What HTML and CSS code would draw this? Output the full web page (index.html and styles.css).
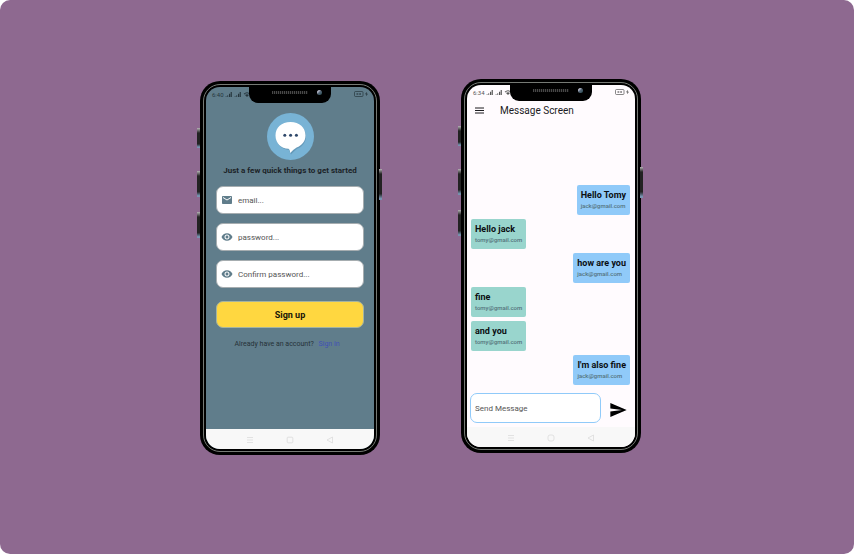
FILE: index.html
```html
<!DOCTYPE html>
<html lang="en">
<head>
<meta charset="utf-8">
<meta name="viewport" content="width=device-width, initial-scale=1">
<title>Chat app</title>
<link rel="stylesheet" href="styles.css">
</head>
<body>
<svg class="defs" aria-hidden="true">
  <symbol id="signal" viewBox="0 0 8 6"><path d="M0 6V5h1v1zM2 6V4h1v2zM4 6V2h1.400v4zM6 6V0h1.400v6z"/></symbol>
  <symbol id="wifi" viewBox="0 0 8 6"><path d="M0 2Q4-1.600 8 2L7.200 3Q4 .2.800 3zM1.600 3.700Q4 1.700 6.400 3.700L4 6z"/></symbol>
  <symbol id="battery" viewBox="0 0 14 6"><path d="M1.500.5h6.500q1 0 1 1v3q0 1-1 1h-6.500q-1 0-1-1v-3q0-1 1-1z" fill="none" stroke="currentColor" stroke-width=".7"/><path d="M2.500 2h1.800v2H2.500zM5.200 2H7v2H5.200z" opacity=".6"/><path d="M12.700.8l-1.600 2.500h1.200v2l1.600-2.600h-1.200z"/></symbol>
  <symbol id="eye" viewBox="0 0 24 24"><path d="M12 4.500C7 4.500 2.730 7.610 1 12c1.730 4.390 6 7.500 11 7.500s9.270-3.110 11-7.500c-1.730-4.390-6-7.500-11-7.500zM12 17c-2.760 0-5-2.240-5-5s2.240-5 5-5 5 2.240 5 5-2.240 5-5 5zm0-8c-1.660 0-3 1.340-3 3s1.340 3 3 3 3-1.340 3-3-1.340-3-3-3z"/></symbol>
  <symbol id="mail" viewBox="0 0 24 24"><path d="M20 4H4c-1.100 0-1.990.9-1.990 2L2 18c0 1.100.9 2 2 2h16c1.100 0 2-.9 2-2V6c0-1.100-.9-2-2-2zm0 4l-8 5-8-5V6l8 5 8-5v2z"/></symbol>
  <symbol id="recent" viewBox="0 0 8 8"><path d="M1 1.500h6M1 4h6M1 6.500h6" fill="none" stroke="currentColor" stroke-width=".8"/></symbol>
  <symbol id="back" viewBox="0 0 8 8"><path d="M6.500 1v6L1 4z" fill="none" stroke="currentColor" stroke-width=".8"/></symbol>
</svg>
<main class="stage">
  <section class="phone" aria-label="Sign up screen">
    <span class="key key-mute"></span><span class="key key-up"></span><span class="key key-down"></span><span class="key key-power"></span>
    <div class="notch"><span class="speaker"></span><span class="camera"></span></div>
    <div class="screen signup">
      <div class="status">
        <span>6:40</span>
        <svg class="signal"><use href="#signal"/></svg><svg class="signal"><use href="#signal"/></svg><svg class="signal"><use href="#wifi"/></svg>
        <svg class="battery"><use href="#battery"/></svg>
      </div>
      <form class="signup-form">
        <svg class="logo" viewBox="0 0 47 47" aria-hidden="true">
          <circle cx="23.500" cy="23.500" r="23.500" fill="#78b3d5"/>
          <path d="M24 10C15 10 9 15.500 9 23.500S15 36.500 22 37L24 41.500Q27 38.500 30 35.800C35.500 34 39 29 39 23.500 39 15.500 33 10 24 10z" fill="#507c98" opacity=".45"/>
          <path d="M23.500 9C14.500 9 8.500 14.700 8.500 22.500s5.500 13 13 13.300c1.200 1 1.600 2.500 1.700 4.200q2.900-3.200 6.400-5.400C35 32.500 38.500 28 38.500 22.500 38.500 14.700 32.500 9 23.500 9z" fill="#fff"/>
          <g fill="#30496b"><circle cx="17.800" cy="22.300" r="1.500"/><circle cx="23.600" cy="22.300" r="1.500"/><circle cx="29.400" cy="22.300" r="1.500"/></g>
        </svg>
        <h1>Just a few quick things to get started</h1>
        <label class="field"><svg aria-hidden="true"><use href="#mail"/></svg><input type="email" placeholder="email..." aria-label="Email"></label>
        <label class="field"><svg aria-hidden="true"><use href="#eye"/></svg><input type="password" placeholder="password..." aria-label="Password"></label>
        <label class="field"><svg aria-hidden="true"><use href="#eye"/></svg><input type="password" placeholder="Confirm password..." aria-label="Confirm password"></label>
        <button class="submit" type="button">Sign up</button>
        <p class="signin">Already have an account? <a href="#">Sign in</a></p>
      </form>
      <div class="navbar">
        <svg><use href="#recent"/></svg>
        <svg viewBox="0 0 8 8"><rect x="1.200" y="1.200" width="5.600" height="5.600" rx=".8" fill="none" stroke="currentColor" stroke-width=".8"/></svg>
        <svg><use href="#back"/></svg>
      </div>
    </div>
  </section>

  <section class="phone phone-raised" aria-label="Message screen">
    <span class="key key-mute"></span><span class="key key-up"></span><span class="key key-down"></span><span class="key key-power"></span>
    <div class="notch"><span class="speaker"></span><span class="camera"></span></div>
    <div class="screen chat">
      <div class="status">
        <span>6:34</span>
        <svg class="signal"><use href="#signal"/></svg><svg class="signal"><use href="#signal"/></svg><svg class="signal"><use href="#wifi"/></svg>
        <svg class="battery"><use href="#battery"/></svg>
      </div>
      <header class="appbar">
        <button type="button" class="menu" aria-label="Menu"><svg viewBox="0 0 9 7"><path d="M0 1h9M0 3.500h9M0 6h9" stroke="currentColor"/></svg></button>
        <h2>Message Screen</h2>
      </header>
      <ul class="messages">
        <li class="mine"><b>Hello Tomy</b><span>jack@gmail.com</span></li>
        <li><b>Hello jack</b><span>tomy@gmail.com</span></li>
        <li class="mine"><b>how are you</b><span>jack@gmail.com</span></li>
        <li><b>fine</b><span>tomy@gmail.com</span></li>
        <li><b>and you</b><span>tomy@gmail.com</span></li>
        <li class="mine"><b>I'm also fine</b><span>jack@gmail.com</span></li>
      </ul>
      <form class="composer">
        <input type="text" placeholder="Send Message" aria-label="Message">
        <button type="button" aria-label="Send"><svg viewBox="0 0 21 18"><path d="M0 18l21-9L0 0v7l15 2-15 2z"/></svg></button>
      </form>
      <div class="navbar">
        <svg><use href="#recent"/></svg>
        <svg viewBox="0 0 8 8"><rect x="1" y="1" width="6" height="6" rx="2" fill="none" stroke="currentColor" stroke-width=".8"/></svg>
        <svg><use href="#back"/></svg>
      </div>
    </div>
  </section>
</main>
</body>
</html>
```
FILE: styles.css
```css
* { box-sizing: border-box; }

body {
  margin: 0;
  background: #fff;
  font-family: Roboto, "Liberation Sans", sans-serif;
}

.defs { position: absolute; width: 0; height: 0; }

svg { display: block; fill: currentColor; }

button, input { font: inherit; }

button { padding: 0; border: 0; background: none; color: inherit; }

.stage {
  display: flex;
  justify-content: center;
  align-items: center;
  gap: 81px;
  min-height: 100vh;
  padding: 0 13px 18px 0;
  border-radius: 10px;
  background: #8e6990;
}

/* Device frame */
.phone {
  position: relative;
  width: 180px;
  padding: 6px;
  border-radius: 20px;
  background: #000;
}

.phone::before {
  content: "";
  position: absolute;
  inset: 3px;
  border: 1px solid #767a75;
  border-radius: 17px;
}

.phone-raised { margin-bottom: 4px; }

.key {
  position: absolute;
  left: -3px;
  width: 3px;
  height: 26px;
  background: linear-gradient(#b5b2b5 0, #222 5px, #222 80%, #7893b0 95%);
}

.key-mute { top: 47px; height: 20px; }
.key-up { top: 90px; }
.key-down { top: 131px; }
.key-power { top: 88px; left: auto; right: -2px; height: 31px; }

.notch {
  position: absolute;
  z-index: 1;
  top: 5px;
  left: 49px;
  width: 82px;
  height: 17px;
  border-radius: 0 0 9px 9px;
  background: #000;
}

.speaker {
  position: absolute;
  top: 5px;
  left: 23px;
  width: 36px;
  height: 3px;
  background: repeating-linear-gradient(90deg, #484848 0 1px, #111 1px 2px);
}

.camera {
  position: absolute;
  top: 4px;
  left: 68px;
  width: 5px;
  height: 5px;
  border-radius: 50%;
  background: linear-gradient(135deg, #ccd 20%, #567 50%, #244b50);
}

.screen {
  position: relative;
  display: flex;
  flex-direction: column;
  min-height: 362px;
  overflow: hidden;
  border-radius: 14px;
}

.status {
  display: flex;
  align-items: center;
  gap: 1px;
  height: 14px;
  padding: 0 6px;
  font-size: 6px;
  color: #26363d;
}

.chat .status { color: #555; }

.signal { width: 8px; height: 5px; }
.battery { width: 14px; height: 6px; margin-left: auto; }

.navbar {
  display: flex;
  justify-content: center;
  align-items: center;
  gap: 32px;
  height: 20px;
  padding-top: 1px;
  background: #f8f8f8;
  color: #dcdcdc;
}

.navbar svg { width: 8px; height: 8px; }

/* Sign up */
.signup { background: #607d8b; }

.signup-form {
  display: flex;
  flex: 1;
  flex-direction: column;
  align-items: stretch;
  gap: 9px;
  padding: 12px 10px 0;
}

.logo { align-self: center; width: 47px; height: 47px; }

.signup h1 {
  margin: -4px 0 1px;
  font-size: 8px;
  line-height: 11px;
  text-align: center;
  white-space: nowrap;
  color: #1c2327;
}

.field {
  display: flex;
  align-items: center;
  gap: 5px;
  height: 28px;
  padding: 0 4px;
  border: 1px solid #a6adb0;
  border-radius: 7px;
  background: #fff;
  color: #607d8b;
}

.field svg { flex: none; width: 12px; height: 12px; }

.field input {
  flex: 1;
  min-width: 0;
  padding: 0;
  border: 0;
  outline: 0;
  background: none;
  font-size: 8px;
  font-weight: 400;
}

input::placeholder { color: #555; opacity: 1; }

.submit {
  height: 27px;
  margin-top: 4px;
  border: 1px solid #a5b4a0;
  border-radius: 7px;
  background: #ffd740;
  color: #171508;
  font-size: 9px;
  font-weight: 700;
}

.signin {
  margin: 2px 0 0;
  padding-right: 6px;
  font-size: 7px;
  line-height: 10px;
  text-align: center;
  color: #263238;
}

.signin a { margin-left: 3px; color: #3f51b5; text-decoration: none; }

/* Chat */
.chat { background: #fffbfe; }

.appbar {
  display: flex;
  align-items: center;
  gap: 16px;
  height: 22px;
  padding: 0 8px;
  color: #1c1b1f;
}

.menu svg { width: 9px; height: 7px; }

.appbar h2 { margin: 0; font-size: 10px; font-weight: 400; }

.messages {
  display: flex;
  flex: 1;
  flex-direction: column;
  justify-content: flex-end;
  align-items: flex-start;
  gap: 4px;
  margin: 0;
  padding: 0 5px 8px 4px;
  list-style: none;
}

.messages li {
  display: flex;
  flex-direction: column;
  height: 30px;
  padding: 4px 4px 0;
  border-radius: 2px;
  background: #99d5cd;
}

.messages .mine { align-self: flex-end; background: #90caf9; }

.messages b { font-size: 9px; line-height: 12px; color: #0b0f12; }

.messages span { font-size: 6px; line-height: 9px; font-weight: 500; color: #54737c; }

.composer {
  display: flex;
  align-items: center;
  gap: 9px;
  padding: 0 8px 4px 3px;
}

.composer input {
  flex: 1;
  min-width: 0;
  height: 30px;
  padding: 0 4px;
  border: 1px solid #90caf9;
  border-radius: 7px;
  background: #fff;
  font-size: 8px;
  font-weight: 400;
}

.composer svg { width: 17px; height: 14px; margin-top: 3px; color: #000; }
```
